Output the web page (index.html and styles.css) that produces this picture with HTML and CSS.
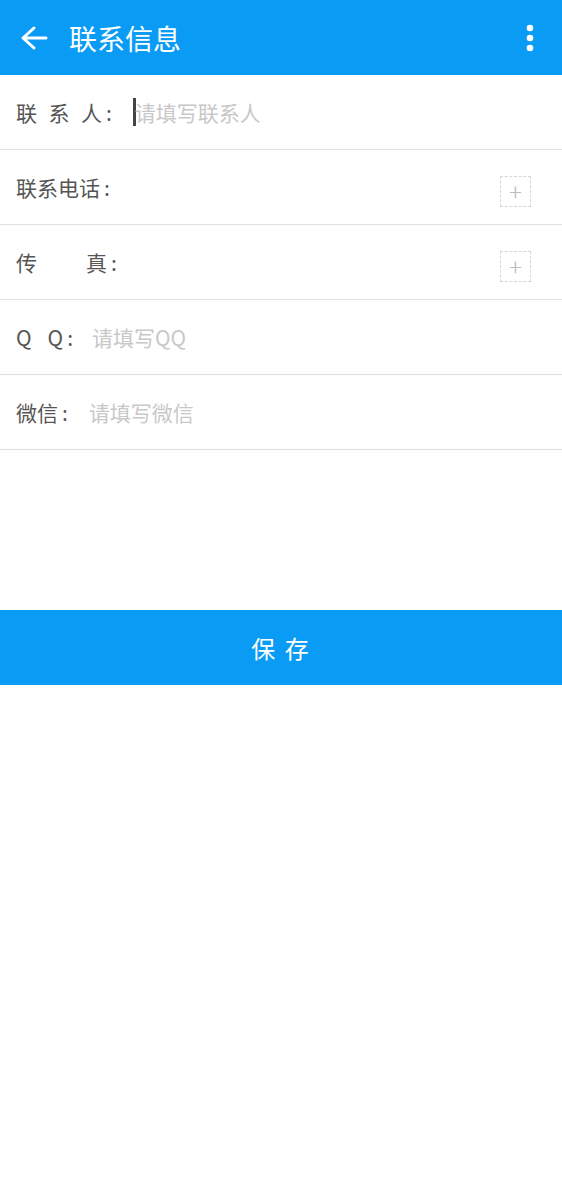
FILE: index.html
```html
<!DOCTYPE html>
<html lang="zh">
<head>
<meta charset="utf-8">
<link rel="stylesheet" href="styles.css">
</head>
<body>
<header class="bar">
  <svg class="back" width="28" height="26" viewBox="0 0 28 26"><path d="M26 13H4M14 3L3 13l11 10" fill="none" stroke="#fff" stroke-width="3" stroke-linecap="round" stroke-linejoin="round"/></svg>
  <h1 class="title">联系信息</h1>
  <svg class="more" width="8" height="28" viewBox="0 0 8 28"><circle cx="4" cy="4" r="3.3" fill="#fff"/><circle cx="4" cy="14" r="3.3" fill="#fff"/><circle cx="4" cy="24" r="3.3" fill="#fff"/></svg>
</header>
<main class="form">
  <div class="row">
    <span class="label g1"><span>联</span><span>系</span><span>人</span></span><span class="colon">:</span>
    <span class="cursor"></span><span class="ph">请填写联系人</span>
  </div>
  <div class="row">
    <span class="label"><span>联系电话</span></span><span class="colon">:</span>
    <span class="add">+</span>
  </div>
  <div class="row">
    <span class="label g3"><span>传</span><span>真</span></span><span class="colon">:</span>
    <span class="add">+</span>
  </div>
  <div class="row">
    <span class="label g4"><span>Q</span><span>Q</span></span><span class="colon c4">:</span>
    <span class="ph">请填写QQ</span>
  </div>
  <div class="row">
    <span class="label"><span>微信</span></span><span class="colon">:</span>
    <span class="ph">请填写微信</span>
  </div>
</main>
<button class="save">保 存</button>
</body>
</html>
```
FILE: styles.css
```css
* { box-sizing: border-box; }
body {
  margin: 0;
  background: #fff;
  font-family: "Noto Sans CJK SC", "Noto Sans", sans-serif;
  width: 562px;
}
.bar {
  height: 75px;
  background: #0a9cf5;
  display: flex;
  align-items: center;
  padding: 0 28px 0 20px;
}
.back { flex: none; }
.title {
  margin: 0 0 0 21px;
  font-size: 28px;
  font-weight: 400;
  color: #fff;
  flex: 1;
  line-height: 1;
}
.more { flex: none; }
.form { display: flex; flex-direction: column; }
.row {
  height: 75px;
  border-bottom: 1px solid #e0e0e0;
  display: flex;
  align-items: center;
  padding: 0 31px 0 16px;
  font-size: 21px;
  color: #555;
}
.label { display: inline-flex; }
.g1 { gap: 11.5px; }
.g3 { gap: 49px; }
.g4 { gap: 16px; }
.colon { margin-left: 4px; margin-right: 21px; }
.colon.c4 { margin-right: 19px; }
.cursor {
  width: 3px;
  height: 28px;
  background: #444;
  margin-right: -1px;
}
.ph { color: #c8c8c8; }
.add {
  margin-left: auto;
  margin-top: 8px;
  width: 31px;
  height: 31px;
  border: 1px dashed #d6d6d6;
  color: #bbb;
  font-size: 24px;
  line-height: 27px;
  text-align: center;
  font-weight: 300;
}
.save {
  display: block;
  width: 100%;
  margin-top: 160px;
  height: 75px;
  border: 0;
  background: #0a9cf5;
  color: #fff;
  font-family: "Noto Sans CJK SC", sans-serif;
  font-size: 24px;
  letter-spacing: 2px;
}
```
